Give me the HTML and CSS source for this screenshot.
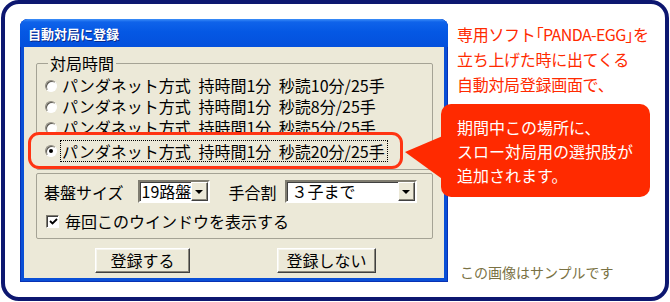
FILE: index.html
```html
<!DOCTYPE html>
<html lang="ja">
  <head>
    <meta charset="UTF-8" />
    <title>自動対局に登録</title>
    <link rel="stylesheet" href="styles.css">
  </head>
  <body>
    <div class="frame">
      <div class="dialog">
        <div class="titlebar">自動対局に登録</div>
        <div class="dlg-body">
          <fieldset class="group time">
            <legend>対局時間</legend>
            <div class="opt"><span class="radio"></span><span class="lbl">パンダネット方式 持時間1分 秒読10分/25手</span></div>
            <div class="opt"><span class="radio"></span><span class="lbl">パンダネット方式 持時間1分 秒読8分/25手</span></div>
            <div class="opt"><span class="radio"></span><span class="lbl">パンダネット方式 持時間1分 秒読5分/25手</span></div>
            <div class="opt pick"><span class="radio on"></span><span class="lbl focus">パンダネット方式 持時間1分 秒読20分/25手</span></div>
          </fieldset>

          <div class="group setup">
            <div class="line">
              <span class="cap">碁盤サイズ</span>
              <span class="combo size"><span class="val">19路盤</span><span class="drop"></span></span>
              <span class="cap hand">手合割</span>
              <span class="combo handi"><span class="val">３子まで</span><span class="drop"></span></span>
            </div>
            <div class="line check">
              <span class="box">
                <svg width="9" height="9" viewBox="0 0 9 9"><path d="M1 4 L3.5 6.5 L8 2" fill="none" stroke="#000" stroke-width="1.8"/></svg>
              </span>
              <span>毎回このウインドウを表示する</span>
            </div>
          </div>

          <div class="buttons">
            <button class="btn ok">登録する</button>
            <button class="btn no">登録しない</button>
          </div>
        </div>
      </div>

      <div class="side">
        <p class="note">専用ソフト<span class="tight">「PANDA-EGG」</span>を<br>立ち上げた時に出てくる<br>自動対局登録画面で、</p>
        <p class="sample">この画像はサンプルです</p>
      </div>

      <div class="callout">期間中この場所に、<br>スロー対局用の選択肢が<br>追加されます。</div>
    </div>
  </body>
</html>
```

FILE: styles.css
```css
:root {
  --navy: #0d1770;
  --beige: #ece9d8;
  --red: #ff2a00;
  --line: #a5a395;
}

body {
  margin: 0;
  background: #fff;
  font-family: "Noto Sans CJK JP", "Noto Sans", sans-serif;
  color: #000;
}

.frame {
  position: relative;
  box-sizing: border-box;
  width: 668px;
  height: 301px;
  margin-left: 1px;
  border: 4px solid var(--navy);
  border-radius: 18px;
  background: #fff;
  display: flex;
  align-items: flex-start;
  padding: 15px 0 0 15px;
}

/* window */
.dialog {
  box-sizing: border-box;
  width: 428px;
  height: 263px;
  display: flex;
  flex-direction: column;
  background: #0a4fd6;
  border-radius: 8px 8px 0 0;
  padding: 0 4px 4px 4px;
  box-shadow: inset 0 0 0 1px #0832b4;
}

.titlebar {
  height: 28px;
  margin: 0 -4px;
  padding-left: 8px;
  border-radius: 8px 8px 0 0;
  background: linear-gradient(#3d8ef8 0, #0f63ea 3px, #0558e4 45%, #0450dc 100%);
  color: #fff;
  font-size: 13px;
  font-weight: bold;
  line-height: 30px;
  text-shadow: 1px 1px 0 #0a2a8a;
}

.dlg-body {
  flex: 1;
  background: var(--beige);
  padding: 7px 11px 0 12px;
}

.group {
  border: 1px solid var(--line);
  border-radius: 2px;
}

.time {
  margin: 0;
  padding: 3px 0 0 8px;
  height: 116px;
  box-sizing: border-box;
}

.time legend {
  font-size: 16px;
  line-height: 18px;
  padding: 0 2px;
  margin-left: 3px;
}

.opt {
  display: flex;
  align-items: center;
  height: 21px;
  font-size: 16px;
  line-height: 21px;
  word-spacing: 4px;
  white-space: nowrap;
}

.radio {
  box-sizing: border-box;
  width: 12px;
  height: 12px;
  border-radius: 50%;
  background: #fff;
  border: 1px solid;
  border-color: #8d8a7f #fff #fff #8d8a7f;
  box-shadow: inset 1px 1px 0 #5a5850;
  margin-right: 5px;
  display: flex;
  align-items: center;
  justify-content: center;
}

.radio.on::after {
  content: "";
  width: 4px;
  height: 4px;
  border-radius: 50%;
  background: #000;
}

.opt.pick {
  position: relative;
  height: 37px;
  box-sizing: border-box;
  width: 375px;
  margin: -6px 0 0 -17px;
  padding-left: 14px;
  border: 3px solid #ff3412;
  border-radius: 11px;
  background: var(--beige);
}

.focus {
  outline: 1px dotted #000;
  padding: 0 2px 0 1px;
  margin-left: -1px;
  line-height: 20px;
}

.setup {
  margin-top: 3px;
  height: 66px;
  box-sizing: border-box;
  padding: 6px 0 0 7px;
  font-size: 16px;
}

.line {
  display: flex;
  align-items: center;
  height: 23px;
  white-space: nowrap;
}

.cap {
  margin-right: 14px;
}

.cap.hand {
  margin-left: 19px;
  margin-right: 8px;
}

.combo {
  box-sizing: border-box;
  height: 23px;
  display: flex;
  align-items: center;
  background: #fff;
  border: 2px solid;
  border-color: #7f7c70 #fff #fff #7f7c70;
  box-shadow: inset 1px 1px 0 #404040;
  padding-left: 2px;
}

.combo .val {
  flex: 1;
  line-height: 19px;
}

.combo.size {
  width: 72px;
}

.combo.handi {
  width: 132px;
}

.combo.handi .val {
  padding-left: 3px;
}

.drop {
  box-sizing: border-box;
  width: 17px;
  height: 19px;
  background: var(--beige);
  border: 1px solid;
  border-color: #fff #404040 #404040 #fff;
  box-shadow: inset -1px -1px 0 #8a877b;
  display: flex;
  align-items: center;
  justify-content: center;
}

.drop::after {
  content: "";
  border-top: 4px solid #000;
  border-left: 4px solid transparent;
  border-right: 4px solid transparent;
}

.line.check {
  margin-top: 8px;
  height: 20px;
}

.box {
  box-sizing: border-box;
  width: 13px;
  height: 13px;
  margin: 0 6px 0 2px;
  background: #fff;
  border: 1px solid;
  border-color: #7f7c70 #fff #fff #7f7c70;
  box-shadow: inset 1px 1px 0 #404040;
  display: flex;
  align-items: center;
  justify-content: center;
}

.box svg {
  margin: 1px 0 0 1px;
}

.buttons {
  display: flex;
  margin-top: 9px;
  padding-left: 59px;
  gap: 87px;
}

.btn {
  box-sizing: border-box;
  height: 25px;
  padding: 0;
  font-family: inherit;
  font-size: 16px;
  line-height: 21px;
  background: var(--beige);
  border: 1px solid;
  border-color: #fff #404040 #404040 #fff;
  box-shadow: inset -1px -1px 0 #8a877b, inset 1px 1px 0 #f6f5ee;
  color: #000;
}

.btn.ok {
  width: 95px;
}

.btn.no {
  width: 99px;
}

/* right column */
.side {
  display: flex;
  flex-direction: column;
  height: 263px;
  padding-left: 9px;
}

.note {
  margin: 3px 0 0;
  color: var(--red);
  font-size: 16px;
  line-height: 25px;
  white-space: nowrap;
  letter-spacing: -0.3px;
}

.note .tight {
  font-feature-settings: "palt";
  letter-spacing: -0.6px;
}

.sample {
  margin: auto 0 0 3px;
  color: #7a7244;
  font-size: 14px;
  line-height: 20px;
}

.callout {
  position: absolute;
  left: 436px;
  top: 100px;
  box-sizing: border-box;
  width: 209px;
  height: 93px;
  padding: 11px 0 0 16px;
  background: var(--red);
  border-radius: 10px;
  color: #fff;
  font-size: 16px;
  line-height: 24px;
  white-space: nowrap;
}

.callout::before {
  content: "";
  position: absolute;
  left: -36px;
  top: 31px;
  width: 40px;
  height: 46px;
  background: var(--red);
  clip-path: polygon(0 17px, 100% 0, 100% 100%);
}
```
